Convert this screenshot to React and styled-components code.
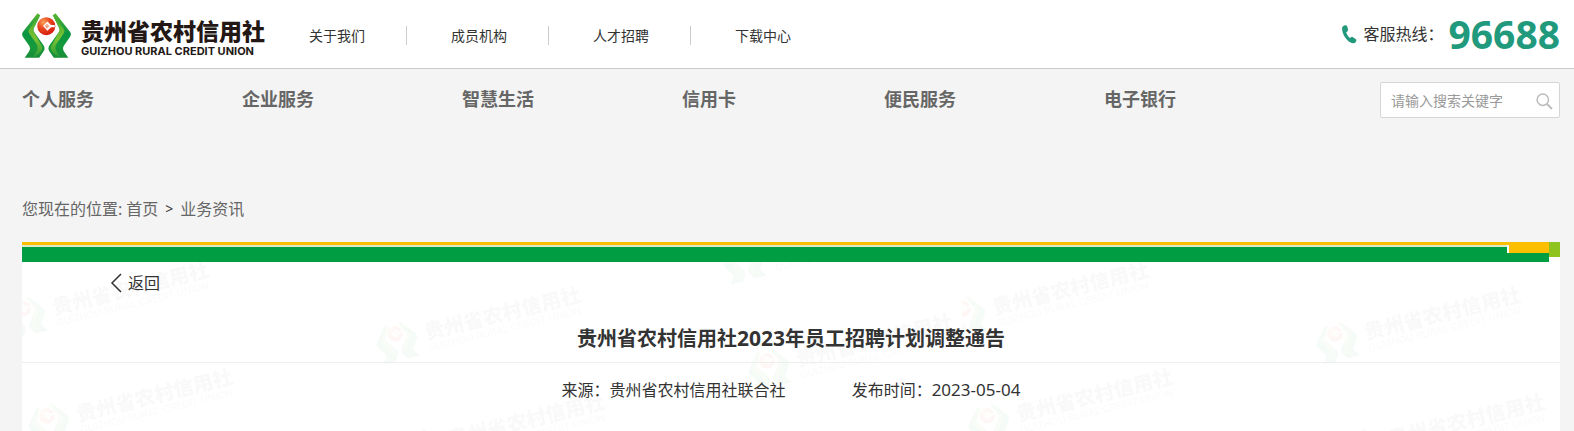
import React from 'react';
import styled, { createGlobalStyle } from 'styled-components';

const GlobalStyle = createGlobalStyle`
  * {
    box-sizing: border-box;
  }

  body {
    margin: 0;
    background: #f4f4f4;
    color: #333;
    font-family: 'Noto Sans', 'Noto Sans CJK SC', sans-serif;
    font-size: 16px;
    line-height: 24px;
  }

  a {
    color: inherit;
    text-decoration: none;
  }

  ul, h1, p {
    margin: 0;
    padding: 0;
    list-style: none;
  }
`;

const Page = styled.div`
  display: flex;
  flex-direction: column;
  min-height: 100vh;
`;

const TopBar = styled.header`
  display: flex;
  align-items: center;
  height: 69px;
  padding: 0 14px 0 22px;
  background: #fff;
  border-bottom: 1px solid #ccc;
`;

const Logo = styled.a`
  display: flex;
  align-items: center;
  gap: 10px;
  padding-top: 3px;
  color: #231815;
`;

const LogoText = styled.span`
  padding-top: 4px;
`;

const LogoName = styled.span`
  display: block;
  font-size: 23px;
  font-weight: 900;
  line-height: 26px;
`;

const LogoEnglish = styled.span`
  display: block;
  font-family: Inter, 'Liberation Sans', sans-serif;
  font-size: 11px;
  font-weight: 700;
  line-height: 14px;
`;

const TopLinks = styled.ul`
  display: flex;
  align-items: center;
  padding-top: 2px;
  font-size: 14px;
  line-height: 19px;
`;

const TopLink = styled.li`
  padding: 0 41px 0 44px;

  & + & {
    border-left: 1px solid #ccc;
  }
`;

const Hotline = styled.div`
  display: flex;
  align-items: center;
  margin-left: auto;

  svg {
    margin-right: 6px;
  }
`;

const HotlineNumber = styled.strong`
  margin-left: 5px;
  color: #21997d;
  font-size: 39px;
  line-height: 48px;
`;

const MainNav = styled.nav`
  display: flex;
  align-items: flex-start;
  justify-content: space-between;
  padding: 13px 14px 0 22px;
`;

const NavList = styled.ul`
  display: flex;
  gap: 148px;
  padding-top: 5px;
  color: #666;
  font-size: 18px;
  font-weight: 700;
`;

const SearchBox = styled.form`
  display: flex;
  align-items: center;
  width: 180px;
  height: 36px;
  padding: 0 6px 0 10px;
  background: #fff;
  border: 1px solid #d5d5d5;
  border-radius: 2px;
`;

const SearchInput = styled.input`
  flex: 1;
  min-width: 0;
  padding: 0;
  border: 0;
  outline: 0;
  background: none;
  font-family: inherit;
  font-size: 14px;

  &::placeholder {
    color: #999;
  }
`;

const SearchButton = styled.button`
  display: flex;
  padding: 2px 0 0;
  border: 0;
  background: none;
  cursor: pointer;
`;

const Main = styled.main`
  display: flex;
  flex: 1;
  flex-direction: column;
  padding: 79px 14px 0 22px;
`;

const Breadcrumb = styled.nav`
  display: flex;
  margin-bottom: 21px;
  color: #666;
`;

const Crumb = styled.a`
  margin-left: 4px;
`;

const CrumbArrow = styled.span`
  margin: 0 3px 0 7px;
  color: #333;
  font-size: 14px;
`;

const Article = styled.article`
  position: relative;
  flex: 1;
  background: #fff;
`;

const Ribbon = styled.div`
  position: relative;
  display: flex;
  height: 20px;
`;

const RibbonPart = styled.div`
  flex: ${(props) => (props.$width ? `0 0 ${props.$width}px` : 1)};
  background: linear-gradient(${(props) => props.$stops});
`;

// faint tiled logo behind the article
const Watermark = styled.svg`
  position: absolute;
  inset: 0;
  width: 100%;
  height: 100%;
  pointer-events: none;
`;

const WatermarkName = styled.text`
  fill: #666;
  font-size: 20px;
  font-weight: 900;
`;

const WatermarkEnglish = styled.text`
  fill: #777;
  font-family: Inter, 'Liberation Sans', sans-serif;
  font-size: 10px;
`;

const Content = styled.div`
  position: relative;
`;

const BackLink = styled.a`
  display: inline-flex;
  align-items: center;
  gap: 6px;
  margin: 9px 0 0 88px;
`;

const Title = styled.h1`
  padding: 24px 0 8px;
  border-bottom: 1px solid #eee;
  font-size: 20px;
  line-height: 30px;
  text-align: center;
`;

const TitleYear = styled.span`
  font-size: 21px;
`;

const Meta = styled.div`
  display: flex;
  justify-content: center;
  gap: 66px;
  padding: 15px 0;
`;

const MetaDate = styled.time`
  font-size: 17px;
`;

const topLinks = ['关于我们', '成员机构', '人才招聘', '下载中心'];
const navItems = ['个人服务', '企业服务', '智慧生活', '信用卡', '便民服务', '电子银行'];

const watermarks = [
  [3, 74],
  [27, 181],
  [375, 99],
  [399, 206],
  [722, 19],
  [747, 126],
];

const LogoMark = ({ width = 49, height = 45, ...rest }) => (
  <svg width={width} height={height} viewBox="0 0 49 45" aria-hidden="true" {...rest}>
    <defs>
      <linearGradient id="leaf" x1="0" y1="0" x2="0" y2="1">
        <stop offset="0" stopColor="#5db531" />
        <stop offset="0.45" stopColor="#079544" />
        <stop offset="0.75" stopColor="#169a3b" />
        <stop offset="1" stopColor="#1a8b38" />
      </linearGradient>
      <linearGradient id="shine" x1="0" y1="0" x2="0" y2="1">
        <stop offset="0" stopColor="#45aa35" />
        <stop offset="0.55" stopColor="#7cc132" />
        <stop offset="1" stopColor="#239a38" />
      </linearGradient>
      <radialGradient id="coin" cx="0.35" cy="0.28" r="0.75">
        <stop offset="0" stopColor="#f9a35b" />
        <stop offset="0.45" stopColor="#ea4a20" />
        <stop offset="1" stopColor="#d7190f" />
      </radialGradient>
      <g id="hand">
        <path
          d="M15.5 0.3L0.8 19C-0.3 20.8 0 22.5 1.2 24.3L7 32.5C8.4 34.8 8.2 36.5 7 38.5L2.7 44.8H17.2L21.8 38C22.9 36 22.8 34.5 21.7 32.6L12.2 19.3C11.3 17.8 11.2 16.7 11.8 15L18.3 2.2Z"
          fill="url(#leaf)"
        />
        <path
          d="M17.8 2.8L7.5 15.5C6.3 17.2 6.3 18.8 7.3 20.4L14.5 31C16 33.5 15.8 36 14.5 38.3L10.4 44.8C16 42 20 38.5 20.2 35.5C20.4 33.6 19.5 32.2 18.3 30.5L12.2 19.3C11.3 17.8 11.2 16.7 11.8 15Z"
          fill="url(#shine)"
        />
      </g>
    </defs>
    <use href="#hand" />
    <use href="#hand" transform="translate(49 0) scale(-1 1)" />
    <circle cx="24.3" cy="13.2" r="9" fill="url(#coin)" />
    <path d="M25.4 8.5L29 12H32.8V14.2H29L25.4 17.7L21 13.1Z" fill="#fff" />
    <path d="M25 10.7L27.6 13.1L25 15.7L22.6 13.1Z" fill="#f2a88a" />
  </svg>
);

const App = () => {
  return (
    <Page>
      <GlobalStyle />
      <TopBar>
        <Logo href="#">
          <LogoMark />
          <LogoText>
            <LogoName>贵州省农村信用社</LogoName>
            <LogoEnglish>GUIZHOU RURAL CREDIT UNION</LogoEnglish>
          </LogoText>
        </Logo>
        <TopLinks>
          {topLinks.map((label) => (
            <TopLink key={label}>
              <a href="#">{label}</a>
            </TopLink>
          ))}
        </TopLinks>
        <Hotline>
          <svg width="15" height="19" viewBox="0 0 15 19" aria-hidden="true">
            <path
              d="M1 1.3C2.5 0 4.6 0 5.2 1.3L6 4.6C6.2 6 5.2 6.7 4.2 7.2C4.8 9.4 6 11.4 7.8 13C8.8 12.2 9.8 11.6 11 12.3L13.9 14.3C15 15.3 14.2 17 12.7 17.9C10.5 19 7.5 17.5 5 14.8C2 11.5 0.2 7.4 0.1 4.2C0.1 3 0.3 2 1 1.3Z"
              fill="#21997d"
            />
          </svg>
          <span>客服热线：</span>
          <HotlineNumber>96688</HotlineNumber>
        </Hotline>
      </TopBar>

      <MainNav>
        <NavList>
          {navItems.map((label) => (
            <li key={label}>
              <a href="#">{label}</a>
            </li>
          ))}
        </NavList>
        <SearchBox role="search">
          <SearchInput type="text" placeholder="请输入搜索关键字" aria-label="请输入搜索关键字" />
          <SearchButton type="button" aria-label="搜索">
            <svg width="17" height="17" viewBox="0 0 17 17" fill="none" stroke="#bbb" aria-hidden="true">
              <circle cx="6.8" cy="6.8" r="5.7" strokeWidth="1.5" />
              <path d="M11 11L16 16" strokeWidth="1.8" />
            </svg>
          </SearchButton>
        </SearchBox>
      </MainNav>

      <Main>
        <Breadcrumb>
          <span>您现在的位置:</span>
          <Crumb href="#">首页</Crumb>
          <CrumbArrow>&gt;</CrumbArrow>
          <Crumb href="#">业务资讯</Crumb>
        </Breadcrumb>

        <Article>
          <Watermark aria-hidden="true">
            <defs>
              <pattern id="tile" width="940" height="320" patternUnits="userSpaceOnUse">
                {watermarks.map(([x, y]) => (
                  <g key={`${x}-${y}`} transform={`translate(${x} ${y}) rotate(-14)`}>
                    <LogoMark x="-21" y="-19" width="42" height="39" />
                    <WatermarkName x="29" y="6">贵州省农村信用社</WatermarkName>
                    <WatermarkEnglish x="29" y="18">GUIZHOU RURAL CREDIT UNION</WatermarkEnglish>
                  </g>
                ))}
              </pattern>
            </defs>
            <rect width="100%" height="100%" fill="url(#tile)" opacity="0.04" />
          </Watermark>

          <Ribbon>
            <RibbonPart $stops="#fbbf00 3px, #dce9c4 3px 5px, #009d42 5px" />
            <RibbonPart $width={2} $stops="#fbbf00 3px, #fff 3px 11px, #009d42 11px" />
            <RibbonPart $width={40} $stops="#fbbf00 11px, #009d42 11px" />
            <RibbonPart $width={11} $stops="#8fc31f 15px, #fff 15px" />
          </Ribbon>

          <Content>
            <BackLink href="#">
              <svg width="12" height="20" viewBox="0 0 12 20" fill="none" stroke="#333" strokeWidth="1.5" aria-hidden="true">
                <path d="M11 1L2 10L11 19" />
              </svg>
              返回
            </BackLink>
            <Title>
              贵州省农村信用社<TitleYear>2023</TitleYear>年员工招聘计划调整通告
            </Title>
            <Meta>
              <p>来源：贵州省农村信用社联合社</p>
              <p>
                发布时间：<MetaDate>2023-05-04</MetaDate>
              </p>
            </Meta>
          </Content>
        </Article>
      </Main>
    </Page>
  );
};

export default App;
